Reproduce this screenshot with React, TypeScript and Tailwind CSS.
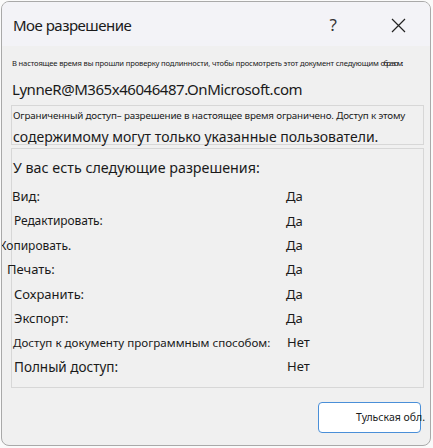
import React from 'react';

const rows: { label: string; value: string; cls: string }[] = [
  { label: 'Вид:', value: 'Да', cls: 'ml-[-1px] text-[13px]' },
  { label: 'Редактировать:', value: 'Да', cls: 'ml-[1px] text-[12px] tracking-[-0.1px]' },
  { label: 'Копировать.', value: 'Да', cls: 'ml-[-14px] text-[12px]' },
  { label: 'Печать:', value: 'Да', cls: 'ml-[-6px] text-[13px]' },
  { label: 'Сохранить:', value: 'Да', cls: 'ml-[1px] text-[13px]' },
  { label: 'Экспорт:', value: 'Да', cls: 'ml-[1px] text-[13px]' },
  { label: 'Доступ к документу программным способом:', value: 'Нет', cls: 'ml-0 text-[11.6px]' },
  { label: 'Полный доступ:', value: 'Нет', cls: 'ml-[1px] text-[13.5px]' },
];

const App: React.FC = () => {
  return (
    <div className="w-[433px] h-[448px] bg-[#fafafa] pt-px pl-px font-['Noto_Sans',sans-serif] text-[#1a1a1a]">
      <div className="w-[430px] h-[445px] rounded-[8px] border border-[#a9a9a9] bg-[#f0f0f0] overflow-hidden flex flex-col">
        {/* title bar */}
        <div className="h-[44px] bg-[#f3f3f7] flex items-center pt-[2px] pl-[11px] pr-[24px] shrink-0">
          <span className="text-[15px] tracking-[-0.5px] flex-1">Мое разрешение</span>
          <span className="text-[17px] text-[#333] mr-[54px]">?</span>
          <svg width="15" height="15" viewBox="0 0 15 15">
            <path d="M1 1L14 14M14 1L1 14" stroke="#222" strokeWidth="1.2" />
          </svg>
        </div>

        <div className="pl-[9px] pr-[6px] flex flex-col">
          <p className="mt-[11px] text-[7.6px] tracking-[-0.15px] whitespace-nowrap leading-[12px] pl-px">
            В настоящее время вы прошли проверку подлинности, чтобы просмотреть этот документ следующим{' '}
            <span className="tracking-[-1.6px]">образом:</span>
          </p>
          <p className="mt-[10px] text-[15px] tracking-[-0.45px] leading-[20px] pl-px">
            LynneR@M365x46046487.OnMicrosoft.com
          </p>

          <div className="mt-[6px] border border-[#d7d7d7] pl-[1px] pt-[3px]">
            <p className="text-[9.8px] leading-[14px] whitespace-nowrap tracking-[-0.15px]">
              Ограниченный доступ– разрешение в настоящее время ограничено. Доступ к этому
            </p>
            <p className="mt-[7px] text-[14px] leading-[14px]">содержимому могут только указанные пользователи.</p>
          </div>

          <div className="mt-[3px] h-[240px] border border-[#d7d7d7] pl-px pt-[9px]">
            <p className="text-[14.3px] leading-[20px]">У вас есть следующие разрешения:</p>
            <div className="mt-[7px] flex flex-col">
              {rows.map((r) => (
                <div key={r.label} className="h-[24.3px] flex items-center">
                  <div className="w-[273px] shrink-0">
                    <span className={`block whitespace-nowrap ${r.cls}`}>{r.label}</span>
                  </div>
                  <span className={r.value === 'Нет' ? 'ml-px text-[13px]' : 'text-[13px]'}>{r.value}</span>
                </div>
              ))}
            </div>
          </div>

          <div className="mt-[14px] flex justify-end pr-[3px]">
            <div className="w-[103px] h-[31px] bg-white border border-[#4a8fd8] rounded-[4px] flex items-center justify-end">
              <span className="text-[10.5px] whitespace-nowrap mr-[-5px]">Тульская обл.</span>
            </div>
          </div>
        </div>
      </div>
    </div>
  );
};

export default App;
